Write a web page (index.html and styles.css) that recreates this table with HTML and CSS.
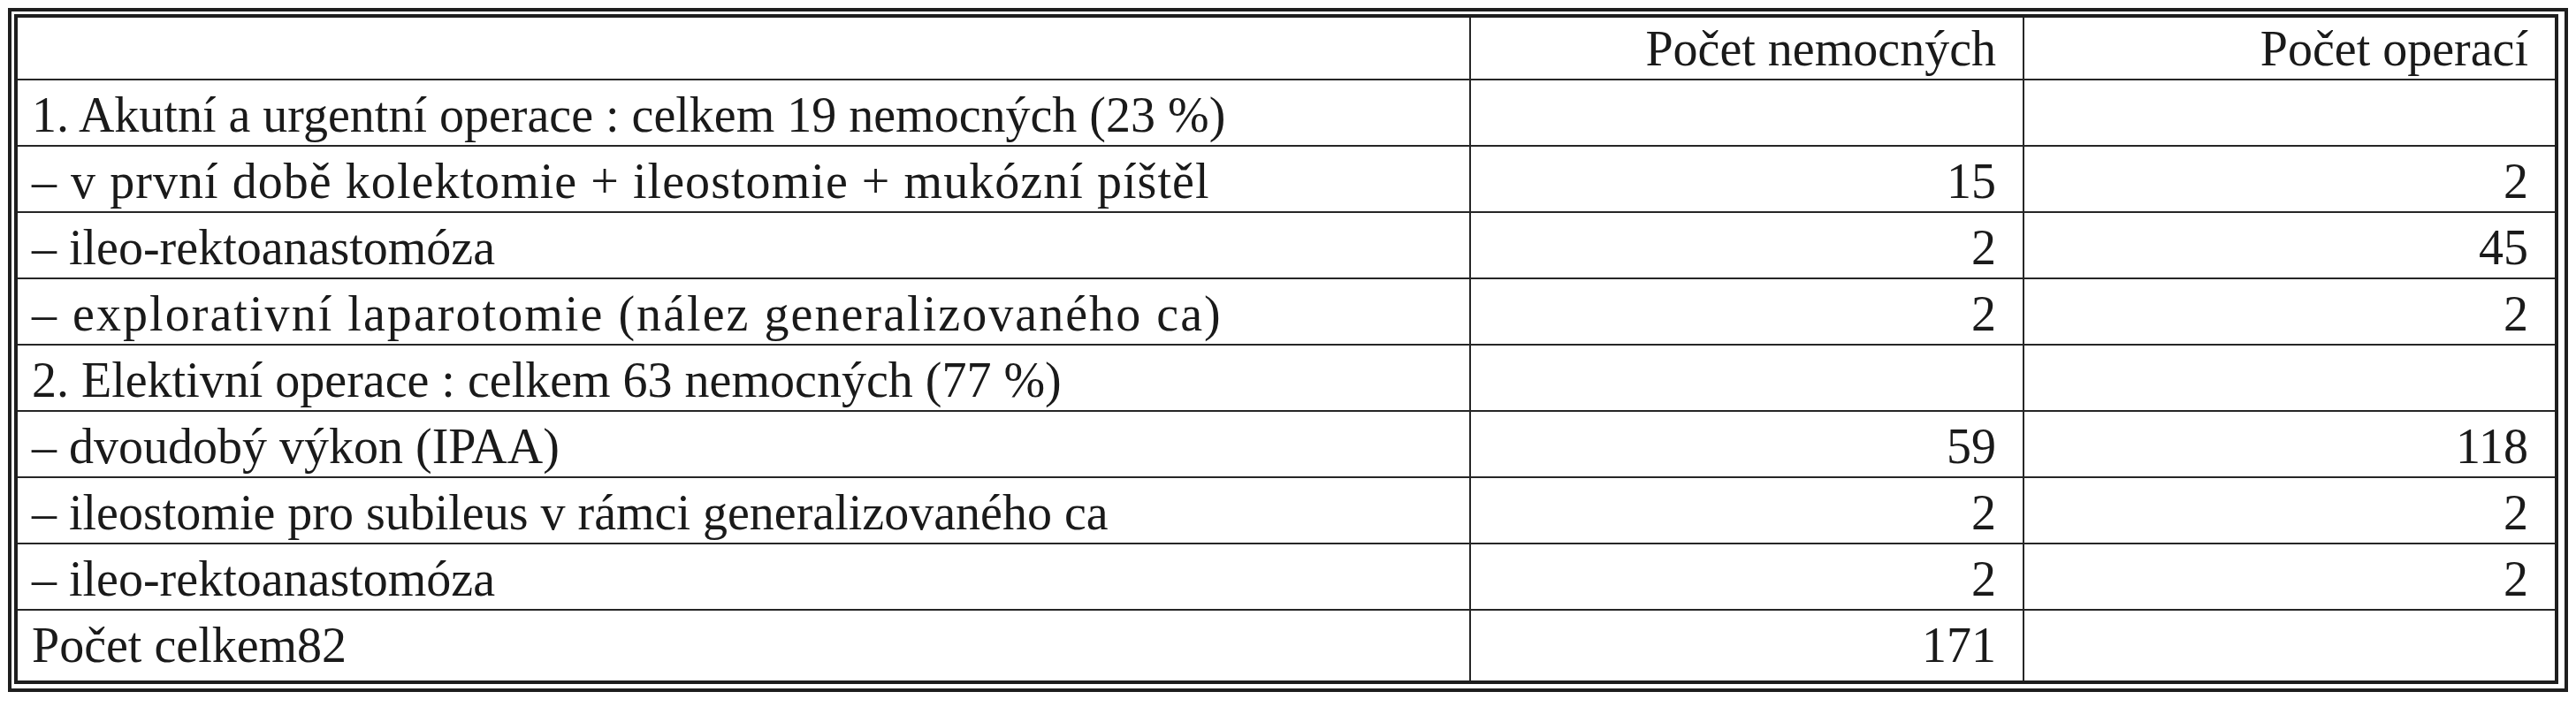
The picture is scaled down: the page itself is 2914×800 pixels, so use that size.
FILE: index.html
```html
<!DOCTYPE html>
<html lang="cs">
<head>
<meta charset="utf-8">
<title>Počet nemocných a operací</title>
<link rel="stylesheet" href="styles.css">
</head>
<body>
<div class="frame">
  <table class="ops">
    <thead>
      <tr class="head">
        <th class="c1"></th>
        <th class="c2 num">Počet nemocných</th>
        <th class="c3 num">Počet operací</th>
      </tr>
    </thead>
    <tbody>
      <tr>
        <td>1. Akutní a urgentní operace : celkem 19 nemocných (23 %)</td>
        <td class="num"></td>
        <td class="num"></td>
      </tr>
      <tr>
        <td class="spread-1">– v první době kolektomie + ileostomie + mukózní píštěl</td>
        <td class="num">15</td>
        <td class="num">2</td>
      </tr>
      <tr>
        <td>– ileo-rektoanastomóza</td>
        <td class="num">2</td>
        <td class="num">45</td>
      </tr>
      <tr>
        <td class="spread-2">– explorativní laparotomie (nález generalizovaného ca)</td>
        <td class="num">2</td>
        <td class="num">2</td>
      </tr>
      <tr>
        <td>2. Elektivní operace : celkem 63 nemocných (77 %)</td>
        <td class="num"></td>
        <td class="num"></td>
      </tr>
      <tr>
        <td>– dvoudobý výkon (IPAA)</td>
        <td class="num">59</td>
        <td class="num">118</td>
      </tr>
      <tr>
        <td>– ileostomie pro subileus v rámci generalizovaného ca</td>
        <td class="num">2</td>
        <td class="num">2</td>
      </tr>
      <tr>
        <td>– ileo-rektoanastomóza</td>
        <td class="num">2</td>
        <td class="num">2</td>
      </tr>
      <tr class="total">
        <td>Počet celkem82</td>
        <td class="num">171</td>
        <td class="num"></td>
      </tr>
    </tbody>
  </table>
</div>
</body>
</html>
```
FILE: styles.css
```css
html, body {
  margin: 0;
  padding: 0;
  background: #ffffff;
}

.frame {
  margin: 9px;
  border: 4px solid #1e1e1e;
  padding: 3px 7px 5px 3px;
  background: #ffffff;
}

.ops {
  width: 100%;
  table-layout: fixed;
  border-spacing: 0;
  border: 4px solid #1e1e1e;
  font-family: "Liberation Serif", "Times New Roman", serif;
  font-size: 56px;
  color: #1a1a1a;
}

.ops th,
.ops td {
  box-sizing: border-box;
  font-family: inherit;
  font-weight: normal;
  text-align: left;
  vertical-align: top;
  white-space: nowrap;
  line-height: 61px;
  padding: 9px 30px 3px 16px;
  border-right: 2px solid #262626;
  border-bottom: 2px solid #262626;
}

.ops th:last-child,
.ops td:last-child {
  border-right: none;
}

.ops .c1 { width: 1644px; }
.ops .c2 { width: 626px; }

.ops .num {
  text-align: right;
}

.ops .spread-1 { letter-spacing: 1.05px; }
.ops .spread-2 { letter-spacing: 2.05px; }

.ops .head th {
  padding-top: 5px;
  padding-bottom: 3px;
}

.ops .total td {
  border-bottom: none;
  padding-bottom: 9px;
}
```
